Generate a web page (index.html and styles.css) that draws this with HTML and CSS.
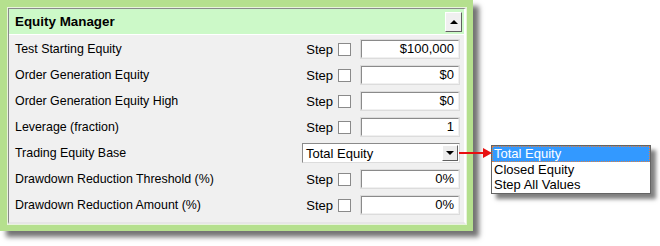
FILE: index.html
```html
<!DOCTYPE html>
<html lang="en">
<head>
  <meta charset="UTF-8" />
  <title>Equity Manager</title>
  <link rel="stylesheet" href="styles.css">
</head>
<body>

  <div class="frame">
    <div class="painel">
      <div class="cabecalho">
        <span>Equity Manager</span>
        <button class="botao-fechar"><span class="seta-cima"></span></button>
      </div>

      <div class="linhas">
        <div class="linha">
          <span class="rotulo">Test Starting Equity</span>
          <span class="step">Step</span><span class="caixa"></span>
          <div class="campo">$100,000</div>
        </div>
        <div class="linha">
          <span class="rotulo">Order Generation Equity</span>
          <span class="step">Step</span><span class="caixa"></span>
          <div class="campo">$0</div>
        </div>
        <div class="linha">
          <span class="rotulo">Order Generation Equity High</span>
          <span class="step">Step</span><span class="caixa"></span>
          <div class="campo">$0</div>
        </div>
        <div class="linha">
          <span class="rotulo">Leverage (fraction)</span>
          <span class="step">Step</span><span class="caixa"></span>
          <div class="campo">1</div>
        </div>
        <div class="linha">
          <span class="rotulo">Trading Equity Base</span>
          <div class="combo">
            <span>Total Equity</span>
            <span class="combo-botao"><span class="seta-baixo"></span></span>
          </div>
        </div>
        <div class="linha">
          <span class="rotulo">Drawdown Reduction Threshold (%)</span>
          <span class="step">Step</span><span class="caixa"></span>
          <div class="campo">0%</div>
        </div>
        <div class="linha">
          <span class="rotulo">Drawdown Reduction Amount (%)</span>
          <span class="step">Step</span><span class="caixa"></span>
          <div class="campo">0%</div>
        </div>
      </div>
    </div>
  </div>

  <svg class="seta-vermelha" width="34" height="10" viewBox="0 0 34 10">
    <line x1="0" y1="5" x2="26" y2="5" stroke="#e81010" stroke-width="2"/>
    <polygon points="24,0 33,5 24,10" fill="#e81010"/>
  </svg>

  <div class="lista">
    <div class="item ativo">Total Equity</div>
    <div class="item">Closed Equity</div>
    <div class="item">Step All Values</div>
  </div>

</body>
</html>
```

FILE: styles.css
```css
body {
  margin: 0;
  background: #fff;
  font-family: 'Liberation Sans', Arial, sans-serif;
  font-size: 12.4px;
  color: #000;
  position: relative;
  width: 660px;
  height: 246px;
  overflow: hidden;
}

.frame {
  width: 458px;
  padding: 8px 7px 7px 8px;
  background: #b5e08e;
  box-shadow: 6px 6px 5px rgba(0,0,0,0.55);
}

.painel {
  background: #f0f0f0;
  border-left: 1px solid #8a8a8a;
  border-top: 1px solid #8a8a8a;
  border-right: 2px solid #ffffff;
  border-bottom: 2px solid #e6e6e6;
  outline: 1px solid #e8f4dc;
}

.cabecalho {
  height: 25px;
  background: #ccf9c8;
  border-bottom: 1px solid #ffffff;
  display: flex;
  align-items: center;
  justify-content: space-between;
  padding: 0 0 0 6px;
  font-size: 13.4px;
  font-weight: bold;
}

.botao-fechar {
  width: 17px;
  height: 20px;
  margin-right: 2px;
  padding: 0;
  background: #f0f0f0;
  border: 1px solid;
  border-color: #ffffff #606060 #606060 #ffffff;
  display: flex;
  align-items: center;
  justify-content: center;
}

.seta-cima {
  width: 0;
  height: 0;
  border-left: 4px solid transparent;
  border-right: 4px solid transparent;
  border-bottom: 4px solid #000;
}

.linhas {
  padding: 1px 0 4px;
}

.linha {
  height: 26px;
  display: flex;
  align-items: center;
  padding-left: 6px;
}

.rotulo {
  flex: 1;
}

.step {
  margin-right: 5px;
  font-size: 13px;
}

.caixa {
  width: 11px;
  height: 11px;
  background: #fff;
  border: 1px solid #8a8a8a;
  margin-right: 9px;
}

.campo {
  width: 92px;
  height: 16px;
  line-height: 16px;
  background: #fff;
  border: 2px solid;
  border-color: #8a8a8a #f0f0f0 #f0f0f0 #8a8a8a;
  outline: 1px solid #dcdcdc;
  outline-offset: -1px;
  text-align: right;
  padding-right: 4px;
  margin-right: 4px;
  font-size: 13px;
}

.combo {
  width: 153px;
  height: 18px;
  background: #fff;
  border: 1px solid #8a8a8a;
  border-bottom-color: #dcdcdc;
  border-right-color: #dcdcdc;
  display: flex;
  align-items: center;
  justify-content: space-between;
  margin-right: 4px;
  font-size: 13px;
  padding-left: 3px;
}

.combo-botao {
  width: 16px;
  height: 16px;
  margin-right: 1px;
  background: #ececec;
  border: 1px solid;
  border-color: #ffffff #606060 #606060 #ffffff;
  box-sizing: border-box;
  display: flex;
  align-items: center;
  justify-content: center;
}

.seta-baixo {
  width: 0;
  height: 0;
  border-left: 4px solid transparent;
  border-right: 4px solid transparent;
  border-top: 4px solid #000;
}

.seta-vermelha {
  position: absolute;
  left: 459px;
  top: 148px;
}

.lista {
  position: absolute;
  left: 491px;
  top: 145px;
  width: 158px;
  background: #fff;
  border: 1px solid #646464;
  box-shadow: 5px 5px 4px rgba(0,0,0,0.5);
  font-size: 13px;
}

.item {
  height: 15.5px;
  line-height: 15.5px;
  padding-left: 2px;
}

.item.ativo {
  background: #3399ff;
  color: #fff;
  outline: 1px dotted #e08040;
  outline-offset: -1px;
}
```
